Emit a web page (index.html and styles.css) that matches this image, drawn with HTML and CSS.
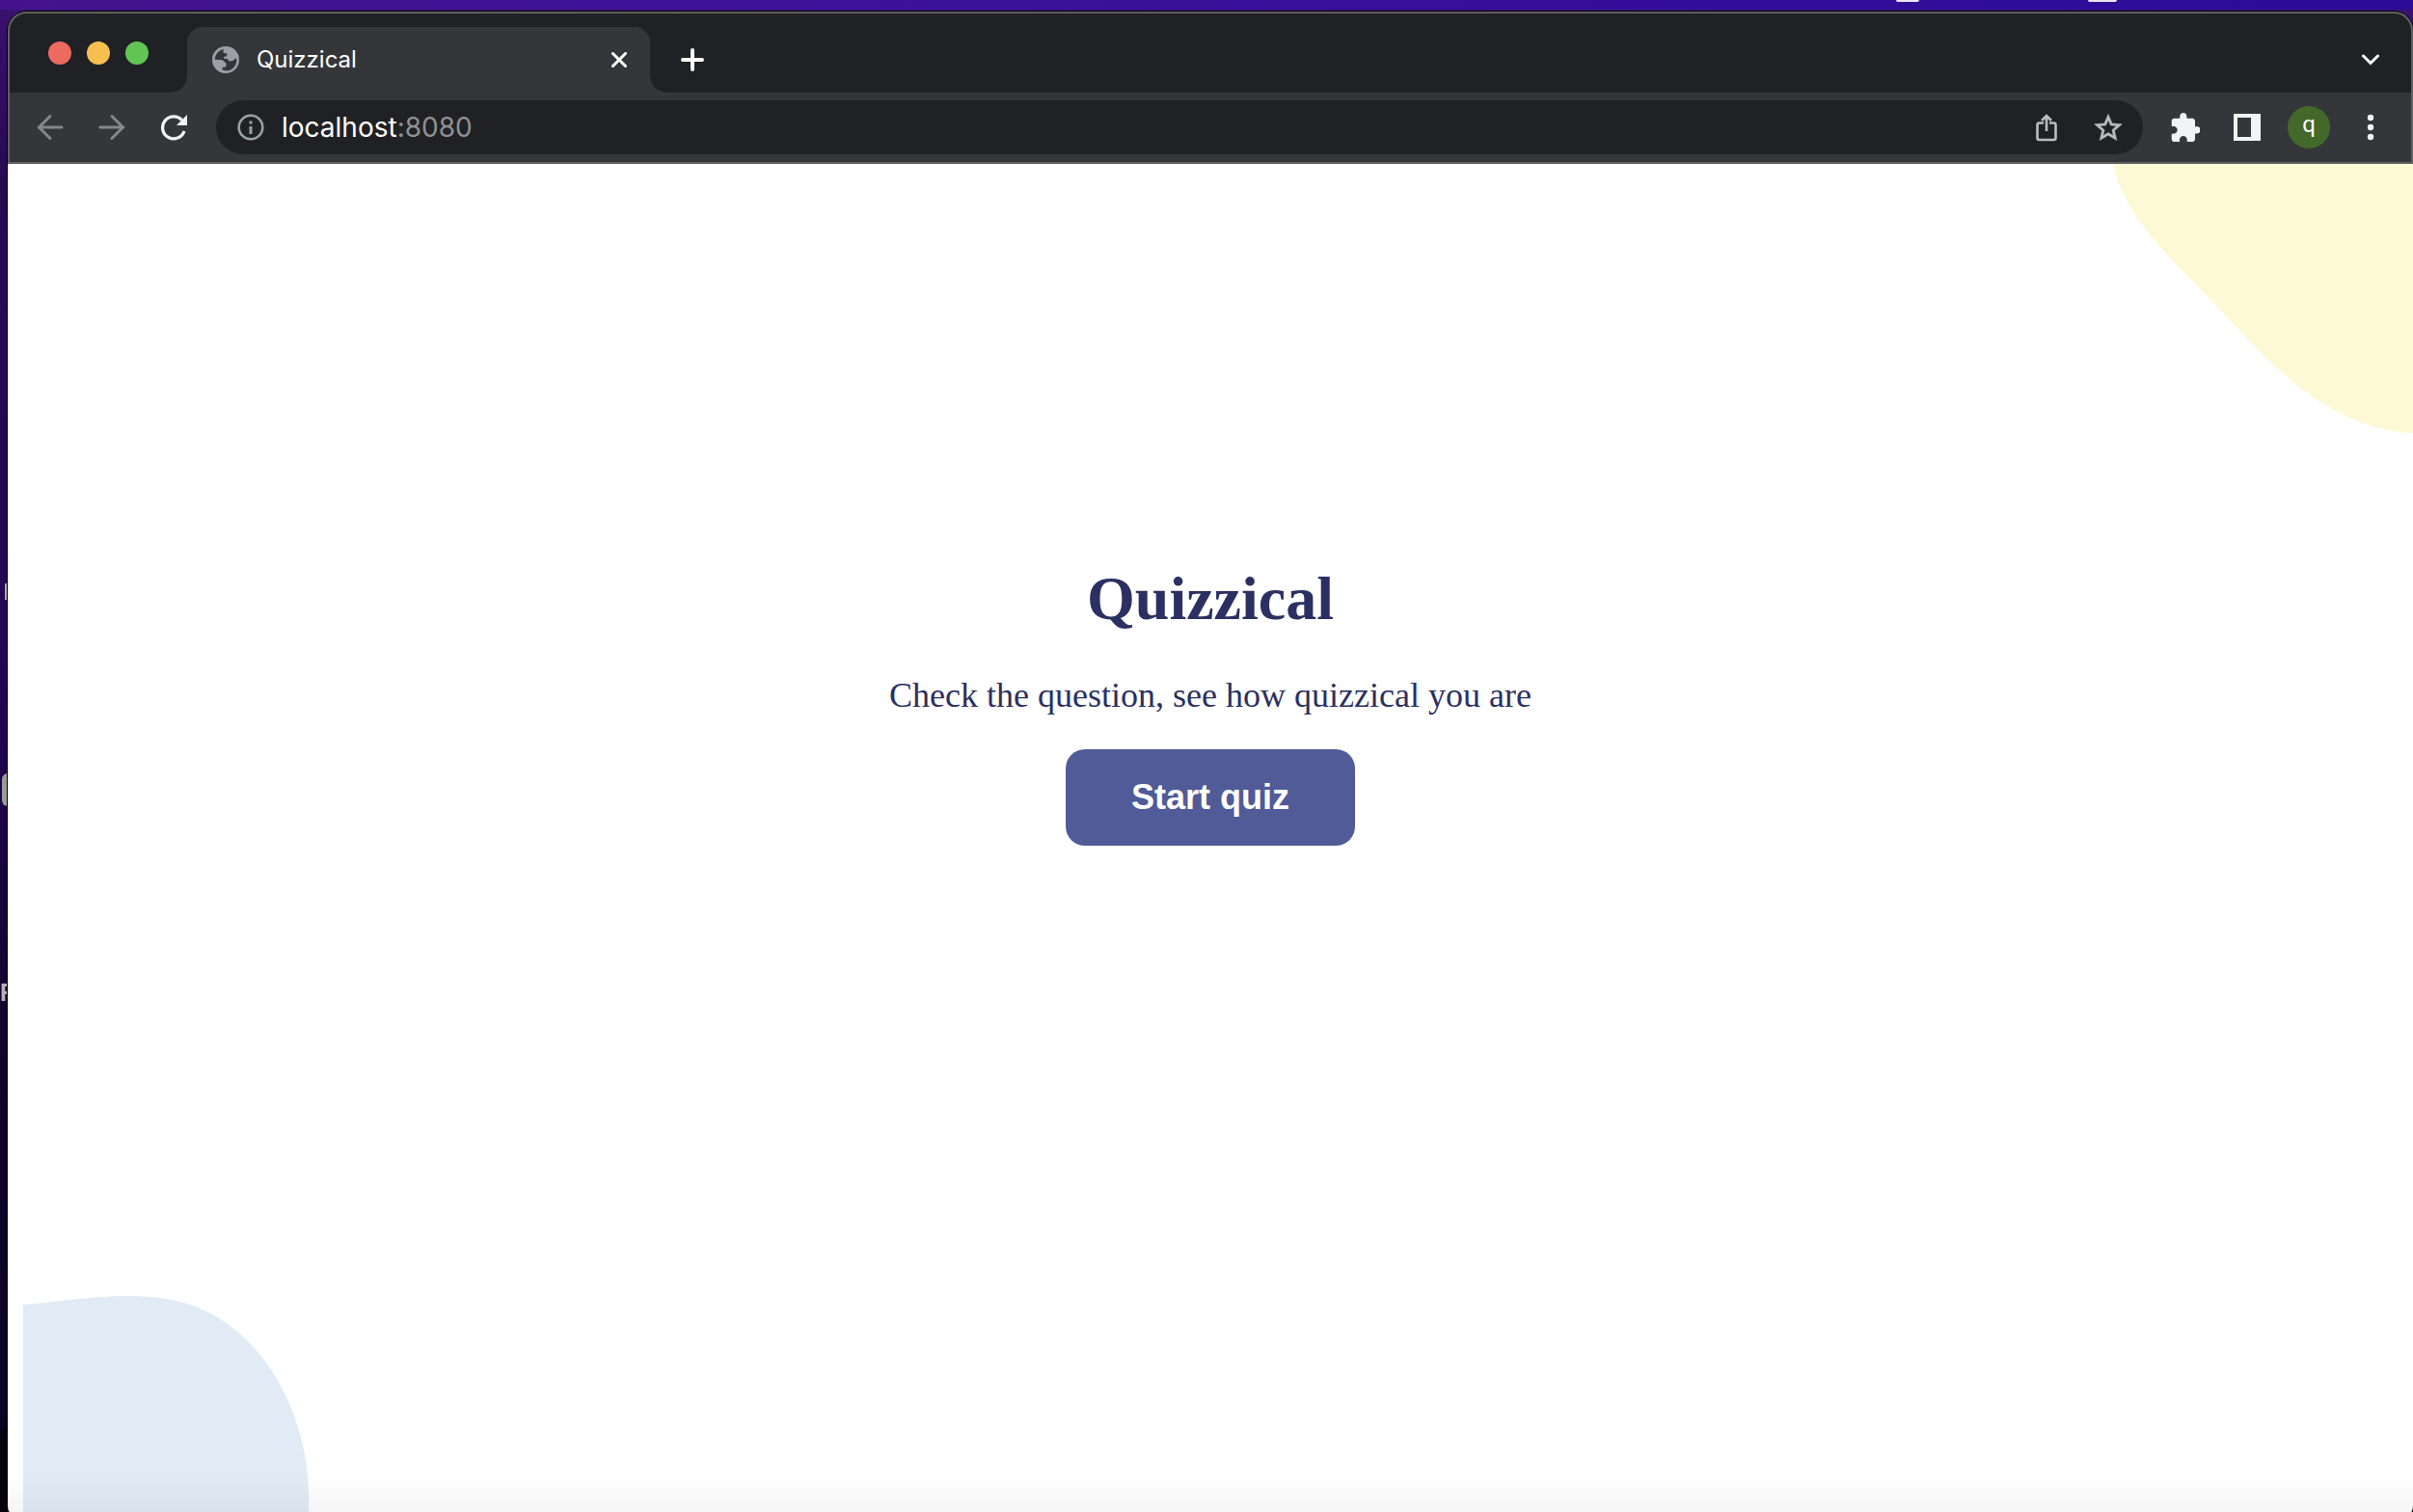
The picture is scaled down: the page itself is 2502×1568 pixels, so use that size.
FILE: index.html
```html
<!DOCTYPE html>
<html lang="en">
<head>
<meta charset="utf-8">
<title>Quizzical</title>
<link rel="stylesheet" href="styles.css">
</head>
<body class="desktop">
<span class="menu-item menu-item-a"></span>
<span class="menu-item menu-item-b"></span>
<span class="desk-mark desk-bar"></span>
<span class="desk-mark desk-tile"></span>
<span class="desk-mark desk-label">F</span>
<div class="window">
  <header class="chrome">
    <div class="tab-strip">
      <div class="lights">
        <button class="light light-close" aria-label="Close window"></button>
        <button class="light light-min" aria-label="Minimise window"></button>
        <button class="light light-max" aria-label="Zoom window"></button>
      </div>
      <div class="tab">
        <svg class="favicon" width="28" height="28" viewBox="0 0 84 84" aria-hidden="true">
          <circle cx="42" cy="42" r="42" fill="#9aa0a6"/>
          <path d="M8 41C9 25 20 12 37 8L34 14Q33 21 39 22H46V28Q46 32 41 32H36V38H44Q50 38 52 46H62Q68 46 69 40L76 38C78 60 62 77 42 76L32 74V65H38Q44 65 44 58Q44 51 38 49L32 43Q28 41 22 42Z" fill="#35363a"/>
        </svg>
        <span class="tab-title">Quizzical</span>
        <button class="tab-close" aria-label="Close tab">
          <svg width="16" height="16" viewBox="0 0 16 16"><path d="M1.500 1.500L14.500 14.500M14.500 1.500L1.500 14.500" stroke="#fff" stroke-width="3" stroke-linecap="round"/></svg>
        </button>
      </div>
      <button class="tool new-tab" aria-label="New tab">
        <svg width="24" height="24" viewBox="0 0 24 24"><path d="M12 2V22M2 12H22" stroke="#fff" stroke-width="4" stroke-linecap="round"/></svg>
      </button>
      <button class="tool tab-search" aria-label="Search tabs">
        <svg width="20" height="12" viewBox="0 0 20 12"><path d="M2.500 2L10 9.500L17.500 2" fill="none" stroke="#fff" stroke-width="3" stroke-linecap="round"/></svg>
      </button>
    </div>
    <div class="toolbar">
      <nav class="tools">
        <button class="tool" aria-label="Back">
          <svg width="28" height="28" viewBox="0 0 28 28"><path d="M26 14H3M14 2.500L2.500 14L14 25.500" fill="none" stroke="#86878a" stroke-width="3" stroke-linecap="round"/></svg>
        </button>
        <button class="tool" aria-label="Forward">
          <svg width="28" height="28" viewBox="0 0 28 28"><path d="M2 14H25M14 2.500L25.500 14L14 25.500" fill="none" stroke="#86878a" stroke-width="3" stroke-linecap="round"/></svg>
        </button>
        <button class="tool" aria-label="Reload">
          <svg width="28" height="28" viewBox="0 0 28 28"><path d="M22.500 6.500A11.500 11.500 0 1 0 25 18" fill="none" stroke="#f1f3f4" stroke-width="3.300"/><path d="M28 1V12H17Z" fill="#f1f3f4"/></svg>
        </button>
      </nav>
      <div class="omnibox">
        <button class="tool" aria-label="Site information">
          <svg width="28" height="28" viewBox="0 0 28 28"><circle cx="14" cy="14" r="12.300" fill="none" stroke="#9aa0a6" stroke-width="2.600"/><path d="M12.500 7.500H15.500V10.500H12.500ZM12.500 13H15.500V21H12.500Z" fill="#9aa0a6"/></svg>
        </button>
        <a class="url" href="#"><span class="host">localhost</span>:8080</a>
        <button class="tool" aria-label="Share">
          <svg width="22" height="29" viewBox="0 0 22 29"><path d="M8 9.500H3.500Q1.500 9.500 1.500 11.500V25Q1.500 27 3.500 27H18.500Q20.500 27 20.500 25V11.500Q20.500 9.500 18.500 9.500H14M11 18V2.500M6 7L11 2L16 7" fill="none" stroke="#bdbdbf" stroke-width="2.600"/></svg>
        </button>
        <button class="tool" aria-label="Bookmark this page">
          <svg width="30" height="30" viewBox="1.500 1 21 21"><path d="M22 9.240l-7.190-.62L12 2 9.190 8.630 2 9.240l5.460 4.730L5.820 21 12 17.270 18.180 21l-1.630-7.030L22 9.240zM12 15.400l-3.760 2.270 1-4.280-3.320-2.880 4.380-.38L12 6.100l1.710 4.040 4.380.38-3.320 2.880 1 4.280L12 15.400z" fill="#bdbdbf" stroke="#bdbdbf" stroke-width=".4"/></svg>
        </button>
      </div>
      <div class="tools">
        <button class="tool" aria-label="Extensions">
          <svg width="30" height="30" viewBox="1.500 1 21 21"><path d="M20.500 11H19V7c0-1.100-.9-2-2-2h-4V3.500C13 2.120 11.880 1 10.500 1S8 2.120 8 3.500V5H4c-1.100 0-1.990.9-1.990 2v3.800H3.500c1.490 0 2.700 1.210 2.700 2.700s-1.210 2.700-2.700 2.700H2V20c0 1.100.9 2 2 2h3.800v-1.500c0-1.490 1.210-2.700 2.700-2.700s2.700 1.210 2.700 2.700V22H17c1.100 0 2-.9 2-2v-4h1.500c1.380 0 2.500-1.120 2.500-2.500S21.880 11 20.500 11z" fill="#f1f3f4"/></svg>
        </button>
        <button class="tool" aria-label="Side panel">
          <svg width="28" height="28" viewBox="0 0 28 28"><path d="M0 0H28V28H0ZM4 4V24H18V4Z" fill="#f1f3f4" fill-rule="evenodd"/></svg>
        </button>
        <button class="tool" aria-label="Profile"><span class="avatar">q</span></button>
        <button class="tool" aria-label="Menu">
          <svg width="8" height="28" viewBox="0 0 8 28"><g fill="#f1f3f4"><circle cx="4" cy="4" r="3.200"/><circle cx="4" cy="14" r="3.200"/><circle cx="4" cy="24" r="3.200"/></g></svg>
        </button>
      </div>
    </div>
  </header>
  <main class="page">
    <svg class="blob blob-yellow" width="312" height="280" viewBox="0 0 312 280" aria-hidden="true"><path d="M1 0C13 56 63 100 103 142C150 190 215 275 312 279V0Z" fill="#fef9d5"/></svg>
    <svg class="blob blob-blue" width="298" height="224" viewBox="0 0 298 224" aria-hidden="true"><path d="M0 9C40 6 70 0 110 0C170 0 205 18 237 51C275 92 296 150 296 209V224H0Z" fill="#e0ebf6"/></svg>
    <section class="intro">
      <h1 class="title">Quizzical</h1>
      <p class="lead">Check the question, see how quizzical you are</p>
      <button class="start">Start quiz</button>
    </section>
  </main>
</div>
</body>
</html>
```
FILE: styles.css
```css
* {
  box-sizing: border-box;
}

.desktop {
  margin: 0;
  min-height: 100vh;
  padding: 12px 0 0 8px;
  display: flex;
  flex-direction: column;
  position: relative;
  overflow: hidden;
  background:
    linear-gradient(90deg, #44138c, #3a119b 40%, #2c0b98) 0 0 / 100% 10px no-repeat,
    linear-gradient(#3b1170, #260a50 12%, #220655 45%, #10032b 70%, #0d0325 94%, #05020e 95%);
  font-family: Inter, "Liberation Sans", sans-serif;
}

button {
  border: 0;
  padding: 0;
  background: none;
  font: inherit;
  color: inherit;
}

/* Menu bar and desktop items that show past the window's edge */
.menu-item,
.desk-mark {
  position: absolute;
}

.menu-item {
  top: 0;
  height: 2px;
  background: #e9e6f5;
  border-radius: 0 0 2px 2px;
}

.menu-item-a {
  left: 1966px;
  width: 24px;
}

.menu-item-b {
  left: 2165px;
  width: 30px;
}

.desk-bar {
  left: 5px;
  top: 605px;
  width: 3px;
  height: 17px;
  background: #aeaaa8;
}

.desk-tile {
  left: 2px;
  top: 802px;
  width: 20px;
  height: 34px;
  border-radius: 6px;
  background: #9a9a98;
}

.desk-label {
  left: 0;
  top: 1016px;
  color: #b5b1b8;
  font-size: 24px;
  line-height: 28px;
  font-weight: 700;
}

.window {
  flex: 1;
  display: flex;
  flex-direction: column;
  position: relative;
  overflow: hidden;
  border-radius: 20px 20px 2px 2px / 20px 20px 8px 8px;
  box-shadow: 0 0 0 1px #000;
  background: #fff;
}

.chrome {
  position: relative;
  background: #35363a;
  border-bottom: 2px solid #5f6064;
}

.chrome::after {
  content: "";
  position: absolute;
  inset: 0;
  border: 2px solid #5f6064;
  border-bottom: 0;
  border-radius: 20px 20px 0 0;
  pointer-events: none;
}

.tab-strip {
  display: flex;
  height: 84px;
  padding: 16px 12px 0 42px;
  background: #202124;
}

.lights {
  display: flex;
  gap: 16px;
  padding-top: 15px;
  margin-right: 40px;
}

.light {
  width: 24px;
  height: 24px;
  border-radius: 50%;
}

.light-close { background: #ed6a5e; }
.light-min { background: #f5bf4f; }
.light-max { background: #61c554; }

.tab {
  position: relative;
  display: flex;
  align-items: center;
  gap: 18px;
  width: 480px;
  padding: 0 24px 0 26px;
  border-radius: 16px 16px 0 0;
  background: #35363a;
  color: #fff;
}

.tab::before,
.tab::after {
  content: "";
  position: absolute;
  bottom: 0;
  width: 16px;
  height: 16px;
}

.tab::before {
  right: 100%;
  background: radial-gradient(circle at 0 0, #202124 15px, #35363a 16px);
}

.tab::after {
  left: 100%;
  background: radial-gradient(circle at 100% 0, #202124 15px, #35363a 16px);
}

.tab-title {
  flex: 1;
  font-size: 24px;
  line-height: 28px;
}

.tab-close {
  display: flex;
}

.tool {
  flex: none;
  display: flex;
  align-items: center;
  justify-content: center;
  width: 64px;
  height: 56px;
}

.new-tab {
  margin: 6px auto 0 12px;
}

.tab-search {
  margin-top: 6px;
}

.toolbar {
  display: flex;
  align-items: center;
  gap: 12px;
  height: 72px;
  padding: 0 12px;
}

.tools {
  display: flex;
}

.omnibox {
  flex: 1;
  display: flex;
  align-items: center;
  height: 56px;
  padding: 0 4px;
  border-radius: 28px;
  background: #202124;
}

.url {
  flex: 1;
  color: #8f9094;
  font-size: 28px;
  line-height: 32px;
  text-decoration: none;
}

.host {
  color: #fff;
}

.avatar {
  width: 44px;
  height: 44px;
  border-radius: 50%;
  background: #43692a;
  color: #fff;
  font-family: Roboto, "Noto Sans", sans-serif;
  font-size: 24px;
  line-height: 38px;
  text-align: center;
}

.page {
  position: relative;
  flex: 1;
  padding-top: 415px;
}

.page::after {
  content: "";
  position: absolute;
  inset: auto 0 0;
  height: 40px;
  background: linear-gradient(rgba(0, 0, 0, 0), rgba(0, 0, 0, 0.04));
}

.blob {
  position: absolute;
}

.blob-yellow {
  top: 0;
  right: 0;
}

.blob-blue {
  left: 16px;
  bottom: 0;
}

.intro {
  display: flex;
  flex-direction: column;
  align-items: center;
  color: #2b3062;
  font-family: "Liberation Serif", serif;
}

.title {
  margin: 0 0 44px;
  font-size: 64px;
  line-height: 72px;
}

.lead {
  margin: 0 0 36px;
  font-size: 36px;
  line-height: 40px;
}

.start {
  width: 300px;
  height: 100px;
  border-radius: 20px;
  background: #505b98;
  color: #fff;
  font-family: "Liberation Sans", sans-serif;
  font-size: 36px;
  font-weight: 700;
}
```
